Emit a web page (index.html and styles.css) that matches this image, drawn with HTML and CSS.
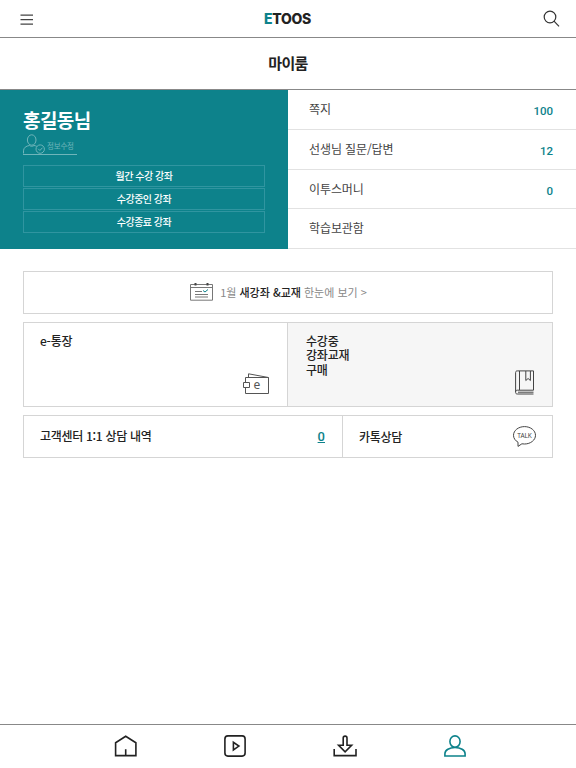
FILE: index.html
```
<!DOCTYPE html>
<html lang="ko">
<head>
    <meta charset="UTF-8">
    <meta name="viewport" content="width=device-width, initial-scale=1.0">
    <title>마이룸</title>
    <link rel="stylesheet" href="styles.css">
</head>
<body>
    <header>
        <button class="icon-btn" aria-label="메뉴">
            <svg width="13" height="12" viewBox="0 0 13 12" fill="none" stroke="#444" stroke-width="1.2">
                <path d="M.5 1.2h12.5M.5 5.7h12.5M.5 10.2h12.5"/>
            </svg>
        </button>
        <a href="#" class="logo"><span>E</span>TOOS</a>
        <button class="icon-btn search" aria-label="검색">
            <svg width="17" height="18" viewBox="0 0 17 18" fill="none" stroke="#333" stroke-width="1.2">
                <circle cx="7" cy="7" r="5.8"/>
                <path d="M11 11.2l5 5.1"/>
            </svg>
        </button>
    </header>

    <h1>마이룸</h1>

    <section class="summary">
        <div class="profile">
            <h2>홍길동님</h2>
            <a href="#" class="edit">
                <svg width="23" height="20" viewBox="0 0 23 20" fill="none" stroke="#6fb5ba" stroke-width="1">
                    <ellipse cx="8.7" cy="6" rx="4.3" ry="5.2"/>
                    <path d="M.5 19.5v-2.6c0-3.2 2.6-4.9 5.9-5.4 1.4 1 3.2 1 4.6 0 1 .1 1.9.4 2.7.8"/>
                    <circle cx="17.2" cy="15.1" r="4.2"/>
                    <path d="M15.2 14.8l1.7 1.7 2.6-2.8"/>
                </svg>
                <span>정보수정</span>
            </a>
            <ul class="courses">
                <li><a href="#">월간 수강 강좌</a></li>
                <li><a href="#">수강중인 강좌</a></li>
                <li><a href="#">수강종료 강좌</a></li>
            </ul>
        </div>
        <ul class="status">
            <li><a href="#">쪽지</a><strong>100</strong></li>
            <li><a href="#">선생님 질문/답변</a><strong>12</strong></li>
            <li><a href="#">이투스머니</a><strong>0</strong></li>
            <li><a href="#">학습보관함</a></li>
        </ul>
    </section>

    <main>
        <a href="#" class="box banner">
            <svg width="23" height="18" viewBox="0 0 23 18" fill="none" stroke="#777" stroke-width="1">
                <path d="M.5 1.5h22v15.7H.5zM.5 4.5h22"/>
                <path d="M5.5 0v2.5M17.5 0v2.5" stroke="#444" stroke-width="2"/>
                <path d="M5 8.5h7M5 11.5h13M5 14h13"/>
                <path d="M13 7.5l2 1.5 3-2.5" stroke="#0d828b"/>
            </svg>
            <span>1월 <b>새강좌 &amp;교재</b> 한눈에 보기 &gt;</span>
        </a>

        <div class="box cards">
            <a href="#" class="card">
                <p>e-통장</p>
                <svg width="26" height="22" viewBox="0 0 26 22" fill="none" stroke="#555" stroke-width="1">
                    <path d="M2.5 9.5v-5h23v16h-23v-6"/>
                    <path d="M5.5 4.5V.8l20 3.7"/>
                    <path d="M.5 9.5h6v5h-6z"/>
                    <text x="10.5" y="16" class="wallet-text">e</text>
                </svg>
            </a>
            <a href="#" class="card gray">
                <p>수강중<br>강좌교재<br>구매</p>
                <svg width="19" height="25" viewBox="0 0 19 25" fill="none" stroke="#444" stroke-width="1">
                    <path d="M18.5 20.2V.9H2.3C1.1.9.6 1.5.6 2.5v20c0 1 .7 1.5 1.7 1.5h16.2"/>
                    <path d="M18.5 20.2H2.3c-1 0-1.7.6-1.7 1.6M4.5 1v19M3 22.2h15.5"/>
                    <path d="M10.8 1v9.5l2.3-2 2.3 2V1"/>
                </svg>
            </a>
        </div>

        <div class="box support">
            <a href="#" class="consult">고객센터 1:1 상담 내역 <em>0</em></a>
            <a href="#" class="talk">카톡상담
                <svg width="23" height="21" viewBox="0 0 23 21" fill="none" stroke="#444" stroke-width="1">
                    <path d="M5 16.2C2.3 14.7.5 12.2.5 9.3.5 4.5 5.4.6 11.5.6s11 3.9 11 8.7-4.9 8.7-11 8.7c-.9 0-1.8-.1-2.6-.2L5 20.4z"/>
                    <text x="11.5" y="11.7" class="talk-text">TALK</text>
                </svg>
            </a>
        </div>
    </main>

    <nav>
        <a href="#" aria-label="홈">
            <svg width="23" height="22" viewBox="0 0 23 22" fill="none" stroke="#222" stroke-width="1.6">
                <path d="M1.6 20.6V7.8l10.1-6.5 10.2 6.5v12.8zM11.7 20.5v-6.3"/>
            </svg>
        </a>
        <a href="#" aria-label="강의">
            <svg width="22" height="22" viewBox="0 0 22 22" fill="none" stroke="#222" stroke-width="1.6">
                <rect x=".9" y=".9" width="20.2" height="20.2" rx="3"/>
                <path d="M9.4 7.3v7.6l5.5-3.8z"/>
            </svg>
        </a>
        <a href="#" aria-label="다운로드">
            <svg width="24" height="22" viewBox="0 0 24 22" fill="none" stroke="#222" stroke-width="1.6">
                <path d="M1.2 14v6.6H23V14"/>
                <path d="M10.2 10.3V3c0-2.5 3.8-2.5 3.8 0v7.3h4.6l-6.500 6.500-6.500-6.500z"/>
            </svg>
        </a>
        <a href="#" aria-label="마이룸">
            <svg width="22" height="22" viewBox="0 0 22 22" fill="none" stroke="#0d828b" stroke-width="1.6">
                <ellipse cx="11" cy="6.6" rx="5.1" ry="5.7"/>
                <path d="M.9 21v-2.3c0-3.700 4.500-6.200 10.100-6.200s10.100 2.500 10.100 6.200V21z"/>
            </svg>
        </a>
    </nav>
</body>
</html>
```

FILE: styles.css
```
* {
    box-sizing: border-box;
}

body {
    font-family: "Noto Sans CJK KR", sans-serif;
    font-size: 12px;
    margin: 0;
    color: #222;
    background: #fff;
    min-height: 100vh;
    display: flex;
    flex-direction: column;
}

a {
    color: inherit;
    text-decoration: none;
}

svg {
    display: block;
}

ul {
    list-style: none;
    margin: 0;
    padding: 0;
}

h1, h2, p {
    margin: 0;
}

header {
    display: grid;
    grid-template-columns: 1fr auto 1fr;
    align-items: center;
    height: 38px;
    padding: 0 16px 0 20px;
    border-bottom: 1px solid #888;
}

.icon-btn {
    border: 0;
    padding: 2px 0 0;
    background: none;
}

.search {
    justify-self: end;
    padding: 0;
}

.logo {
    margin-right: 5px;
    font-family: "Inter", "Liberation Sans", sans-serif;
    font-size: 14px;
    font-weight: 800;
    letter-spacing: -0.3px;
    line-height: 18px;
}

.logo span {
    color: #0d828b;
}

h1 {
    height: 52px;
    border-bottom: 1px solid #888;
    font-size: 15px;
    font-weight: 700;
    line-height: 50px;
    letter-spacing: -0.7px;
    text-align: center;
}

.summary {
    display: grid;
    grid-template-columns: 1fr 1fr;
    grid-template-rows: 159px;
    height: 159px;
}

.profile {
    padding: 16px 23px 0;
    background: #0d828b;
    color: #fff;
}

.profile h2 {
    font-size: 19px;
    font-weight: 700;
    line-height: 27px;
    letter-spacing: -0.6px;
}

.edit {
    display: flex;
    align-items: flex-end;
    gap: 1px;
    width: 54px;
    height: 22px;
    border-bottom: 1px solid #6fb5ba;
    font-size: 7.5px;
    line-height: 17px;
    letter-spacing: -0.2px;
    color: #6fb5ba;
    white-space: nowrap;
}

.courses {
    display: grid;
    gap: 1px;
    margin-top: 10px;
}

.courses li {
    height: 22px;
    border: 1px solid #3095a0;
    font-size: 10px;
    font-weight: 500;
    line-height: 20px;
    letter-spacing: -0.5px;
    text-align: center;
}

.status {
    display: grid;
    grid-template-rows: repeat(4, minmax(0, 1fr));
}

.status li {
    display: flex;
    justify-content: space-between;
    padding: 0 23px 0 21px;
    border-bottom: 1px solid #e2e2e2;
    line-height: 37px;
    letter-spacing: -0.1px;
    color: #444;
}

.status strong {
    font-family: Roboto, sans-serif;
    font-size: 11.5px;
    font-weight: 500;
    letter-spacing: 0;
    line-height: 35px;
    padding-top: 4px;
    color: #0d828b;
}

main {
    flex: 1;
    display: flex;
    flex-direction: column;
    gap: 8px;
    padding: 22px 23px 0;
}

.box {
    display: flex;
    border: 1px solid #d5d5d5;
}

.banner {
    height: 43px;
    align-items: center;
    justify-content: center;
    gap: 7px;
    padding: 0 19px 1px 0;
    color: #888;
    font-size: 11px;
}

.banner b {
    font-weight: 500;
    color: #222;
}

.cards {
    height: 85px;
}

.card {
    display: flex;
    justify-content: space-between;
    align-items: flex-end;
    width: 263px;
    padding: 11px 18px 11px 16px;
    font-weight: 500;
    line-height: 14.4px;
    letter-spacing: -0.2px;
}

.card p {
    align-self: flex-start;
}

.gray {
    flex: 1;
    padding-left: 18px;
    border-left: 1px solid #d5d5d5;
    background: #f6f6f6;
}

.wallet-text {
    font-family: "Noto Sans", sans-serif;
    font-size: 12px;
    font-weight: 400;
    fill: #555;
    stroke: none;
}

.support {
    height: 43px;
    font-weight: 500;
    line-height: 40px;
    letter-spacing: -0.3px;
}

.consult {
    display: flex;
    justify-content: space-between;
    width: 318px;
    padding: 0 17px 0 16px;
}

.consult em {
    font-family: Roboto, sans-serif;
    font-size: 13px;
    font-style: normal;
    line-height: 42px;
    letter-spacing: 0;
    text-decoration: underline;
    color: #0d828b;
}

.talk {
    flex: 1;
    display: flex;
    justify-content: space-between;
    align-items: center;
    padding: 0 16px;
    border-left: 1px solid #d5d5d5;
}

.talk-text {
    font-family: "Noto Sans", sans-serif;
    font-size: 6.5px;
    font-weight: 400;
    letter-spacing: -0.1px;
    text-anchor: middle;
    fill: #444;
    stroke: none;
}

nav {
    display: flex;
    justify-content: space-between;
    height: 44px;
    padding: 10px 110px 0 114px;
    border-top: 1px solid #888;
}
```
